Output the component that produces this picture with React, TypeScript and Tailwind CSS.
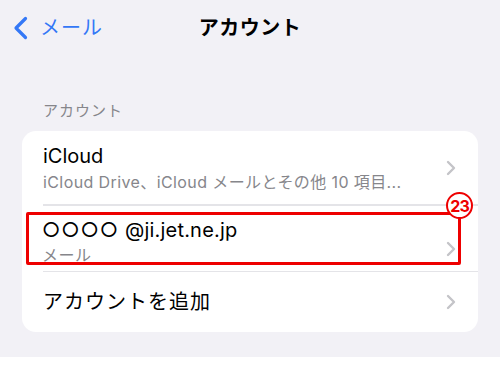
import { ReactNode } from 'react'

const FONT = { fontFamily: 'Inter, "Noto Sans CJK JP", sans-serif' }

function Chevron() {
  return (
    <svg width="10" height="16" viewBox="0 0 10 16" className="shrink-0">
      <path d="M2 2l6 6-6 6" fill="none" stroke="#c4c4c8" strokeWidth="2.4" strokeLinecap="round" strokeLinejoin="round" />
    </svg>
  )
}

function Row({ children, className }: { children: ReactNode; className: string }) {
  return <div className={`flex items-start pr-[22px] ${className}`}>{children}</div>
}

export default function App() {
  return (
    <div className="w-[500px] h-[376px] bg-white text-black" style={FONT}>
      <div className="h-[357px] bg-[#f2f1f6] flex flex-col">
        {/* Nav bar */}
        <div className="relative h-[56px] flex items-center px-[13px]">
          <div className="flex items-center gap-[12px] text-[#3478f6]">
            <svg width="15" height="24" viewBox="0 0 15 24">
              <path d="M12.5 2.5L3 12l9.5 9.5" fill="none" stroke="#3478f6" strokeWidth="3.2" strokeLinecap="round" strokeLinejoin="round" />
            </svg>
            <span className="text-[20px] tracking-[1px]">メール</span>
          </div>
          <h1 className="absolute left-0 right-0 text-center text-[20px] font-bold tracking-[0.5px]">アカウント</h1>
        </div>

        {/* Section label */}
        <div className="mt-[45px] pl-[43px] text-[15px] leading-[20px] text-[#86868b] tracking-[1px]">アカウント</div>

        {/* Card */}
        <div className="relative mx-[22px] mt-[10px] bg-white rounded-[14px] flex flex-col">
          <Row className="h-[73px] pl-[21px] pt-[13px]">
            <div className="flex-1">
              <div className="text-[20px] leading-[24px]">iCloud</div>
              <div className="mt-[4px] text-[16px] leading-[20px] text-[#86868b] tracking-[0.4px]">iCloud Drive、iCloud メールとその他 10 項目...</div>
            </div>
            <div className="pt-[16px]"><Chevron /></div>
          </Row>
          <div className="ml-[21px] h-[1.5px] bg-[#e4e4e8]" />
          <Row className="h-[65px] pl-[20px] pt-[12px]">
            <div className="flex-1">
              <div className="text-[20px] leading-[24px] tracking-[0.2px]">
                <span className="tracking-[1px]">○○○○</span> @ji.jet.ne.jp
              </div>
              <div className="mt-[2px] text-[16px] leading-[22px] text-[#86868b] tracking-[0.5px]">メール</div>
            </div>
            <div className="pt-[23px]"><Chevron /></div>
          </Row>
          <div className="ml-[21px] h-[1.5px] bg-[#e4e4e8]" />
          <Row className="h-[60px] pl-[21px] items-center">
            <div className="flex-1 flex items-center justify-between h-[60px]">
              <span className="text-[20px] tracking-[1px]">アカウントを追加</span>
              <Chevron />
            </div>
          </Row>

          {/* Red annotation */}
          <div className="absolute left-[4px] top-[81px] w-[435px] h-[53px] border-[3px] border-[#ee0000] rounded-[2px] pointer-events-none" />
          <div className="absolute left-[424px] top-[61px] w-[27px] h-[27px] rounded-full bg-white border-[2.5px] border-[#ee0000] flex items-center justify-center">
            <span className="text-[16px] font-bold text-[#ee0000] leading-none tracking-[-1px]">23</span>
          </div>
        </div>
      </div>
    </div>
  )
}
